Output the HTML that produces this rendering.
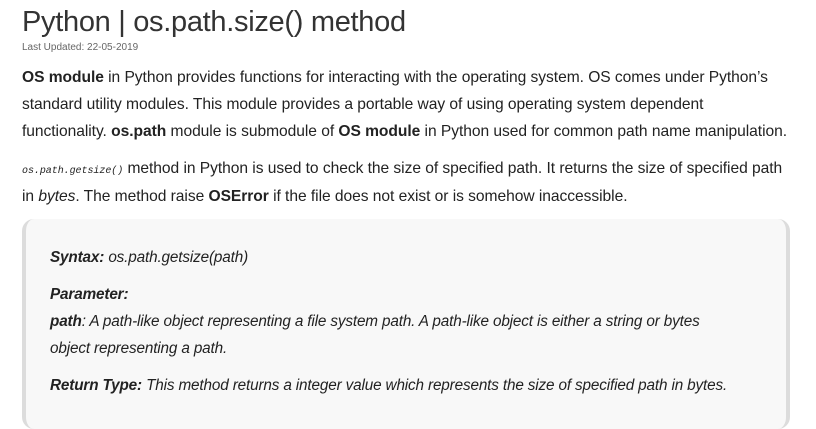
<!DOCTYPE html>
<html><head><meta charset="utf-8"><style>
body{margin:0;background:#fff;font-family:"Liberation Sans",sans-serif;color:#222;width:816px;height:412px;overflow:hidden;position:relative}
.t{position:absolute;white-space:nowrap}
h1{position:absolute;left:22px;top:6px;margin:0;font-weight:normal;font-size:29px;color:#333;letter-spacing:-0.3px}
.up{left:22px;top:42px;font-size:10px;color:#666}
.p{font-size:15.6px;letter-spacing:-0.05px;color:#222}
code{font-family:"Liberation Mono",monospace;font-style:italic;font-size:10px}
.box{position:absolute;left:22px;top:219px;width:760px;height:210px;background:#f8f8f8;border-left:4px solid #dcdcdc;border-right:4px solid #dcdcdc;border-radius:12px}
.i{font-style:italic;font-size:15.3px;letter-spacing:-0.15px}
</style></head><body>
<h1>Python | os.path.size() method</h1>
<div class="t up">Last Updated: 22-05-2019</div>
<div class="t p" style="left:22px;top:69px"><b>OS module</b> in Python provides functions for interacting with the operating system. OS comes under Python’s</div>
<div class="t p" style="left:22px;top:96px">standard utility modules. This module provides a portable way of using operating system dependent</div>
<div class="t p" style="left:22px;top:123px">functionality. <b>os.path</b> module is submodule of <b>OS module</b> in Python used for common path name manipulation.</div>
<div class="t p" style="left:22px;top:160px"><code>os.path.getsize()</code> method in Python is used to check the size of specified path. It returns the size of specified path</div>
<div class="t p" style="left:22px;top:188px">in <i>bytes</i>. The method raise <b>OSError</b> if the file does not exist or is somehow inaccessible.</div>
<div class="box"></div>
<div class="t p i" style="left:50px;top:249px"><b>Syntax:</b> os.path.getsize(path)</div>
<div class="t p i" style="left:50px;top:286px"><b>Parameter:</b></div>
<div class="t p i" style="left:50px;top:313px"><b>path</b>: A path-like object representing a file system path. A path-like object is either a string or bytes</div>
<div class="t p i" style="left:50px;top:340px">object representing a path.</div>
<div class="t p i" style="left:50px;top:377px"><b>Return Type:</b> This method returns a integer value which represents the size of specified path in bytes.</div>
</body></html>
